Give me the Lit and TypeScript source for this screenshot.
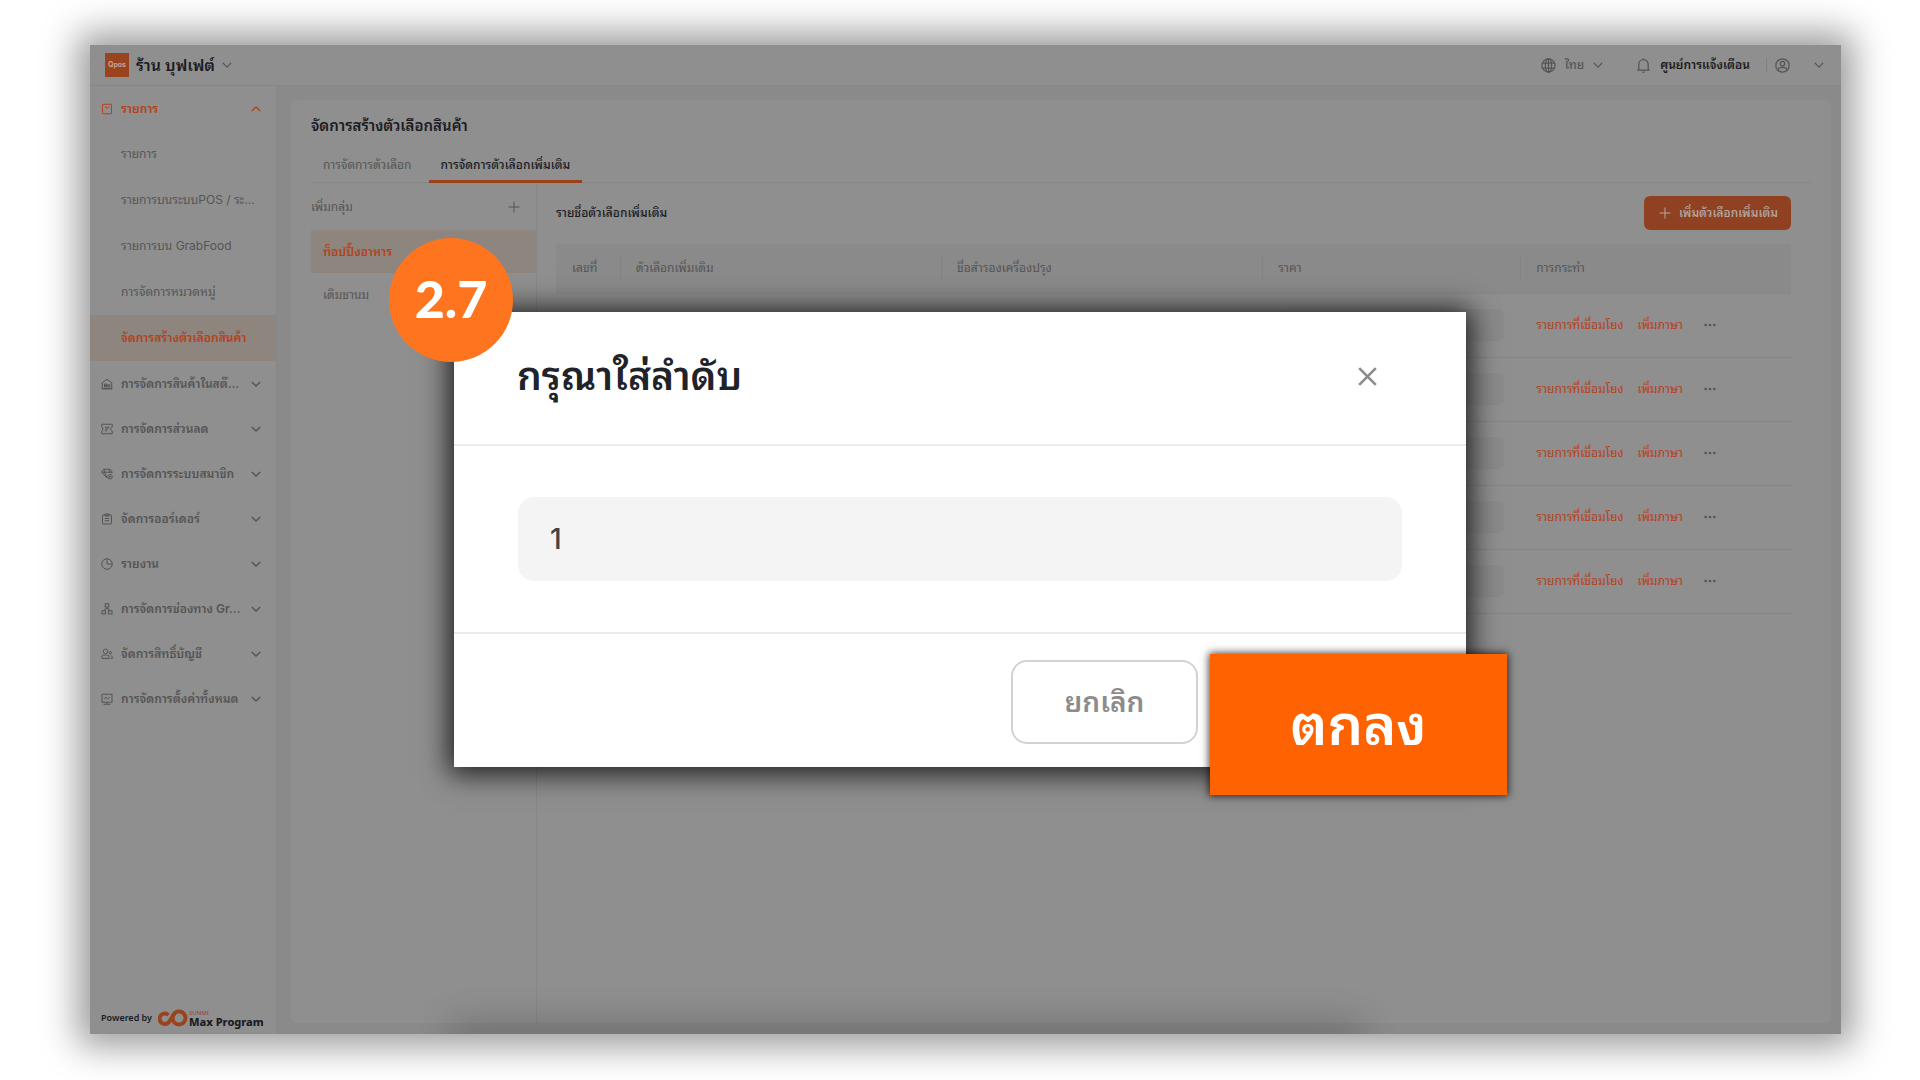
import { LitElement, html, css, svg, type TemplateResult, type SVGTemplateResult } from "lit";
import { customElement, property } from "lit/decorators.js";
import { classMap } from "lit/directives/class-map.js";

const ICONS: Record<string, SVGTemplateResult> = {
  bag: svg`<rect x="3" y="2.5" width="18" height="19" rx="1"/><path d="M8.5 6.5c0 5 7 5 7 0"/>`,
  home: svg`<path d="M2.5 21.500V9.500L12 2.500l9.500 7v12z"/><path d="M7 12v6h4v-6zM7 15h4M13.500 18v-4.500H18V18zM1.500 21.500h21"/>`,
  ticket: svg`<path d="M1.500 2.500h21v5.500c-4 0-4 8 0 8v5.500h-21v-5.500c3 0 3-8 0-8z"/><path d="M8 8.500h9M8 12h7M8 15.500h4"/>`,
  gem: svg`<path d="M12 20 1.500 8.500l4-6h13l4 6-1.500 2M1.500 8.500h21M8 2.500l-1 6 5 11.500M16 2.500l1 6"/><circle cx="18" cy="17.500" r="4.500"/><circle cx="18" cy="17.500" r="1.200"/>`,
  clipboard: svg`<rect x="3" y="4" width="18" height="18" rx="1"/><path d="M8 2h8v4H8zM7.500 11h9M7.500 15.500h9"/>`,
  chart: svg`<circle cx="12" cy="12" r="10.500"/><path d="M12 1.500V12h10.500"/>`,
  tree: svg`<rect x="8.500" y="1.500" width="7" height="6.500"/><rect x="2" y="15.500" width="7" height="6.500"/><rect x="15" y="15.500" width="7" height="6.500"/><path d="M12 8v3.500M5.500 15.500l3-4h7l3 4"/>`,
  people: svg`<circle cx="9" cy="6.500" r="4.500"/><path d="M2 21v-4a3 3 0 0 1 3-3h8a3 3 0 0 1 3 3v4zM19 21h3.500v-3l-2-3"/><circle cx="18.500" cy="9.500" r="2.500"/>`,
  monitor: svg`<rect x="2" y="2.500" width="20" height="16"/><path d="M6.500 11.500l3.500-3 3 4 4.500-4.500M5 22.500h14M12 18.500v4"/>`,
  down: svg`<path d="M2 7l10 10 10-10"/>`,
  up: svg`<path d="M2 17l10-10 10 10"/>`,
  plus: svg`<path d="M12 1v22M1 12h22"/>`,
  close: svg`<path d="M2.500 2.500l19 19M21.500 2.500l-19 19"/>`,
  globe: svg`<circle cx="12" cy="12" r="10.500"/><ellipse cx="12" cy="12" rx="5" ry="10.500"/><path d="M12 1.500v21M2.500 8h19M2.500 16h19"/>`,
  bell: svg`<path d="M2 19.500h20M4.500 19.500V10a7.500 7.500 0 0 1 15 0v9.500M12 .5v2M10 22.500h4"/>`,
  user: svg`<circle cx="12" cy="12" r="10.700"/><circle cx="12" cy="9" r="3.500"/><path d="M4.500 19.500c1-6 14-6 15 0"/>`,
  dots: svg`<g fill="currentColor" stroke="none"><circle cx="3.500" cy="12" r="2.600"/><circle cx="12" cy="12" r="2.600"/><circle cx="20.500" cy="12" r="2.600"/></g>`,
};

@customElement("line-icon")
class LineIcon extends LitElement {
  @property() name = "";
  @property({ type: Number }) weight = 2;

  static styles = css`
    :host { display: inline-flex; flex: none; width: 12px; height: 12px; }
    svg { width: 100%; height: 100%; overflow: visible; }
  `;

  render() {
    return html`<svg viewBox="0 0 24 24" fill="none" stroke="currentColor" stroke-width=${this.weight} aria-hidden="true">${ICONS[this.name]}</svg>`;
  }
}

interface NavEntry { icon?: string; label: string; state?: "open" | "active"; }

const NAV: NavEntry[] = [
  { icon: "bag", label: "รายการ", state: "open" },
  { label: "รายการ" },
  { label: "รายการบนระบบPOS / ระ..." },
  { label: "รายการบน GrabFood" },
  { label: "การจัดการหมวดหมู่" },
  { label: "จัดการสร้างตัวเลือกสินค้า", state: "active" },
  { icon: "home", label: "การจัดการสินค้าในสต๊..." },
  { icon: "ticket", label: "การจัดการส่วนลด" },
  { icon: "gem", label: "การจัดการระบบสมาชิก" },
  { icon: "clipboard", label: "จัดการออร์เดอร์" },
  { icon: "chart", label: "รายงาน" },
  { icon: "tree", label: "การจัดการช่องทาง Gr..." },
  { icon: "people", label: "จัดการสิทธิ์บัญชี" },
  { icon: "monitor", label: "การจัดการตั้งค่าทั้งหมด" },
];

const COLUMNS = ["เลขที่", "ตัวเลือกเพิ่มเติม", "ชื่อสำรองเครื่องปรุง", "ราคา", "การกระทำ"];

@customElement("app-root")
class AppRoot extends LitElement {
  static styles = css`
    :host {
      display: flex;
      box-sizing: border-box;
      min-height: 100vh;
      padding: 45px 79px 46px 90px;
      background: #fff;
      position: relative;
      overflow: hidden;
      font-family: Inter, "Noto Sans Thai Looped", "Noto Looped Thai", Loma, Waree, Garuda, Umpush, Laksaman, "Noto Sans Thai", "Noto Sans", sans-serif;
      font-size: 12px;
      line-height: 20px;
      color: #555;
      --surface: #8f8f8f;
      --muted: #8a8a8a;
      --rule: #868686;
      --ink: #1b1c22;
      --accent: #b3421a;
      --tint: #8f857f;
    }
    *, *::before, *::after { box-sizing: border-box; }
    button, input { font: inherit; color: inherit; border: 0; background: none; padding: 0; margin: 0; outline: 0; }
    a { color: inherit; text-decoration: none; }
    h1, h2, ul { margin: 0; padding: 0; list-style: none; font-size: inherit; }

    .window {
      flex: 1;
      display: flex;
      flex-direction: column;
      position: relative;
      overflow: hidden;
      background: var(--muted);
      box-shadow: 0 0 34px 12px rgba(0, 0, 0, 0.4);
    }
    .window::after {
      content: "";
      position: absolute;
      left: 370px;
      right: 490px;
      bottom: -12px;
      height: 12px;
      box-shadow: 0 0 36px 12px rgba(0, 0, 0, 0.2);
    }
    .topbar {
      display: flex;
      align-items: center;
      justify-content: space-between;
      height: 41px;
      padding: 0 17px 0 15px;
      background: var(--surface);
      border-bottom: 1px solid var(--rule);
    }
    .shop, .tools, .tool { display: flex; align-items: center; }
    .shop { gap: 7px; color: var(--ink); font-size: 16px; font-weight: 600; }
    .shop line-icon { color: #555; width: 10px; height: 10px; }
    .logo {
      display: grid;
      place-items: center;
      width: 24px;
      height: 24px;
      background: #99441f;
      color: #c9a294;
      font-size: 7px;
      line-height: 8px;
      font-weight: 700;
    }
    .tool { gap: 9px; font-weight: 500; }
    .tools .tool + .tool { margin-left: 33px; }
    .tools .tool.account { margin-left: 16px; padding-left: 8px; gap: 24px; border-left: 1px solid #818181; }
    .tools line-icon { width: 15px; height: 15px; }
    .tools line-icon[name="down"] { width: 10px; height: 10px; }
    .tools line-icon[name="bell"] { color: #555; }
    .notice { color: var(--ink); font-weight: 600; }

    .body { flex: 1; display: flex; }
    .sidebar {
      display: flex;
      flex-direction: column;
      justify-content: space-between;
      width: 187px;
      background: var(--surface);
      border-right: 1px solid var(--rule);
    }
    .nav a { display: flex; align-items: center; height: 45px; padding: 0 15px 0 11px; font-weight: 600; white-space: nowrap; }
    .nav a.sub { height: 46px; padding: 0 0 0 31px; font-weight: 400; }
    .nav span { flex: 1; padding-left: 8px; }
    .nav .sub span { padding: 0; }
    .nav a.open, .nav a.active { color: var(--accent); font-weight: 600; }
    .nav a.active { background: var(--tint); }
    .nav .chev { width: 10px; height: 10px; }
    .powered { display: flex; align-items: center; gap: 6px; padding: 0 11px 6px; color: var(--ink); font-family: "Noto Sans", sans-serif; font-size: 9px; font-weight: 600; white-space: nowrap; }
    .powered svg { width: 30px; height: 18px; flex: none; }
    .brand { display: flex; flex-direction: column; font-size: 11px; line-height: 11px; font-weight: 800; margin-left: -5px; }
    .brand small { color: #99441f; font-size: 6px; line-height: 6px; font-weight: 400; }

    .card {
      flex: 1;
      display: flex;
      flex-direction: column;
      margin: 14px 10px 11px 14px;
      padding: 14px 20px 0;
      border-radius: 6px;
      background: var(--surface);
    }
    .title { color: var(--ink); font-size: 15px; line-height: 24px; font-weight: 600; }
    .tabs { display: flex; height: 45px; padding-top: 12px; border-bottom: 1px solid var(--rule); }
    .tab { display: flex; align-items: center; padding: 0 12px; margin-right: 5px; margin-bottom: -1px; border-bottom: 3px solid transparent; font-weight: 400; }
    .tab.on { color: var(--ink); font-weight: 500; border-color: #9c4218; }
    .split { flex: 1; display: flex; }
    .groups { width: 226px; border-right: 1px solid var(--rule); }
    .groups-head { display: flex; align-items: center; justify-content: space-between; height: 47px; padding-right: 16px; }
    .groups button { display: flex; }
    .groups li { display: flex; align-items: center; height: 43px; padding-left: 12px; }
    .groups li.on { background: var(--tint); color: var(--accent); font-weight: 600; }
    .pane { flex: 1; padding: 13px 20px 0 19px; }
    .pane-head { display: flex; align-items: center; justify-content: space-between; height: 34px; margin-bottom: 14px; color: var(--ink); font-weight: 500; }
    .add { display: flex; align-items: center; gap: 8px; height: 34px; padding: 0 13px 0 15px; border-radius: 6px; background: #8f4121; color: #b5aaa5; font-weight: 500; }
    table { width: 100%; table-layout: fixed; border-collapse: collapse; }
    th, td { height: 64px; padding: 0 16px; text-align: left; font-weight: 400; border-bottom: 1px solid var(--rule); }
    th { height: 49px; background: var(--muted) linear-gradient(#848484, #848484) no-repeat left center / 1px 24px; }
    th:first-child { background: var(--muted); }
    .c0 { width: 64px; }
    .c1, .c2 { width: 26%; }
    .c3 { width: 20.9%; }
    .price { display: block; width: 100%; height: 32px; border-radius: 6px; background: var(--muted); }
    .actions { display: flex; align-items: center; gap: 14px; color: var(--accent); white-space: nowrap; }
    .actions button { display: flex; color: #555; margin-left: 7px; }

    .modal {
      position: absolute;
      top: 312px;
      left: 454px;
      right: 454px;
      background: #fff;
      box-shadow: 0 2px 26px 5px rgba(0, 0, 0, 0.8);
    }
    .modal-head { display: flex; align-items: center; justify-content: space-between; height: 134px; padding: 0 88px 4px 63px; border-bottom: 2px solid #ebebeb; }
    .modal-head h2 { color: #202329; font-size: 39px; line-height: 60px; font-weight: 600; }
    .modal-head button { display: flex; color: #8c8c8c; }
    .modal-head line-icon { width: 21px; height: 21px; }
    .modal-body { padding: 51px 64px; border-bottom: 2px solid #ebebeb; }
    .modal-body input { display: block; width: 100%; height: 84px; padding: 0 32px; border-radius: 16px; background: #f4f4f4; color: #404247; font-size: 28px; font-weight: 500; }
    .modal-foot { display: flex; justify-content: flex-end; padding: 26px 268px 23px 0; }
    .cancel { width: 187px; height: 84px; border: 2px solid #d2d2d2; border-radius: 16px; color: #8c8c8c; font-size: 28px; font-weight: 600; }
    .ok {
      position: absolute;
      right: -41px;
      bottom: -28px;
      width: 297px;
      height: 141px;
      background: #ff6200;
      box-shadow: 0 0 8px 1px rgba(0, 0, 0, 0.75);
      color: #fff;
      font-size: 56px;
      font-weight: 600;
    }
    .step {
      position: absolute;
      left: -65px;
      top: -74px;
      display: grid;
      place-items: center;
      width: 124px;
      height: 124px;
      padding-bottom: 4px;
      border-radius: 50%;
      background: #ff741f;
      color: #fff;
      font-family: Lato, "Open Sans", sans-serif;
      font-size: 52px;
      line-height: 60px;
      font-weight: 900;
    }
  `;

  private navItem(e: NavEntry): TemplateResult {
    return html`<a href="#" class=${classMap({ sub: !e.icon, open: e.state === "open", active: e.state === "active" })}>
      ${e.icon ? html`<line-icon name=${e.icon}></line-icon>` : ""}
      <span>${e.label}</span>
      ${e.icon ? html`<line-icon class="chev" weight="3.5" name=${e.state === "open" ? "up" : "down"}></line-icon>` : ""}
    </a>`;
  }

  render() {
    return html`
      <div class="window">
        <header class="topbar">
          <button class="shop"><span class="logo">Qpos</span>ร้าน บุฟเฟต์<line-icon name="down" weight="3"></line-icon></button>
          <div class="tools">
            <button class="tool"><line-icon name="globe"></line-icon>ไทย<line-icon name="down" weight="3"></line-icon></button>
            <button class="tool notice"><line-icon name="bell"></line-icon>ศูนย์การแจ้งเตือน</button>
            <button class="tool account" aria-label="บัญชี"><line-icon name="user"></line-icon><line-icon name="down" weight="3"></line-icon></button>
          </div>
        </header>
        <div class="body">
          <aside class="sidebar">
            <nav class="nav">${NAV.map((e) => this.navItem(e))}</nav>
            <div class="powered">Powered by
              <svg viewBox="0 0 60 36" fill="none" stroke="#99441f" stroke-width="8" aria-hidden="true">
                <circle cx="42" cy="18" r="13"/>
                <path d="M21 12A10.500 10.500 0 1 0 22 26L33 9"/>
              </svg>
              <span class="brand"><small>SUNMI</small>Max Program</span>
            </div>
          </aside>
          <main class="card">
            <h1 class="title">จัดการสร้างตัวเลือกสินค้า</h1>
            <div class="tabs">
              <button class="tab">การจัดการตัวเลือก</button>
              <button class="tab on">การจัดการตัวเลือกเพิ่มเติม</button>
            </div>
            <div class="split">
              <section class="groups">
                <div class="groups-head">เพิ่มกลุ่ม<button aria-label="เพิ่มกลุ่ม"><line-icon name="plus"></line-icon></button></div>
                <ul><li class="on">ท็อปปิ้งอาหาร</li><li>เติมชานม</li></ul>
              </section>
              <section class="pane">
                <div class="pane-head">รายชื่อตัวเลือกเพิ่มเติม
                  <button class="add"><line-icon name="plus"></line-icon>เพิ่มตัวเลือกเพิ่มเติม</button>
                </div>
                <table>
                  <thead><tr>${COLUMNS.map((c, i) => html`<th class="c${i}">${c}</th>`)}</tr></thead>
                  <tbody>${[1, 2, 3, 4, 5].map(() => html`<tr>
                    <td></td><td></td><td></td>
                    <td><input class="price" aria-label="ราคา" /></td>
                    <td><div class="actions"><a href="#">รายการที่เชื่อมโยง</a><a href="#">เพิ่มภาษา</a><button aria-label="เพิ่มเติม"><line-icon name="dots"></line-icon></button></div></td>
                  </tr>`)}</tbody>
                </table>
              </section>
            </div>
          </main>
        </div>
      </div>
      <div class="modal" role="dialog" aria-labelledby="order-title">
        <div class="modal-head">
          <h2 id="order-title">กรุณาใส่ลำดับ</h2>
          <button aria-label="ปิด"><line-icon name="close" weight="3"></line-icon></button>
        </div>
        <div class="modal-body"><input aria-labelledby="order-title" .value=${"1"} /></div>
        <div class="modal-foot"><button class="cancel">ยกเลิก</button></div>
        <button class="ok">ตกลง</button>
        <div class="step">2.7</div>
      </div>
    `;
  }
}
